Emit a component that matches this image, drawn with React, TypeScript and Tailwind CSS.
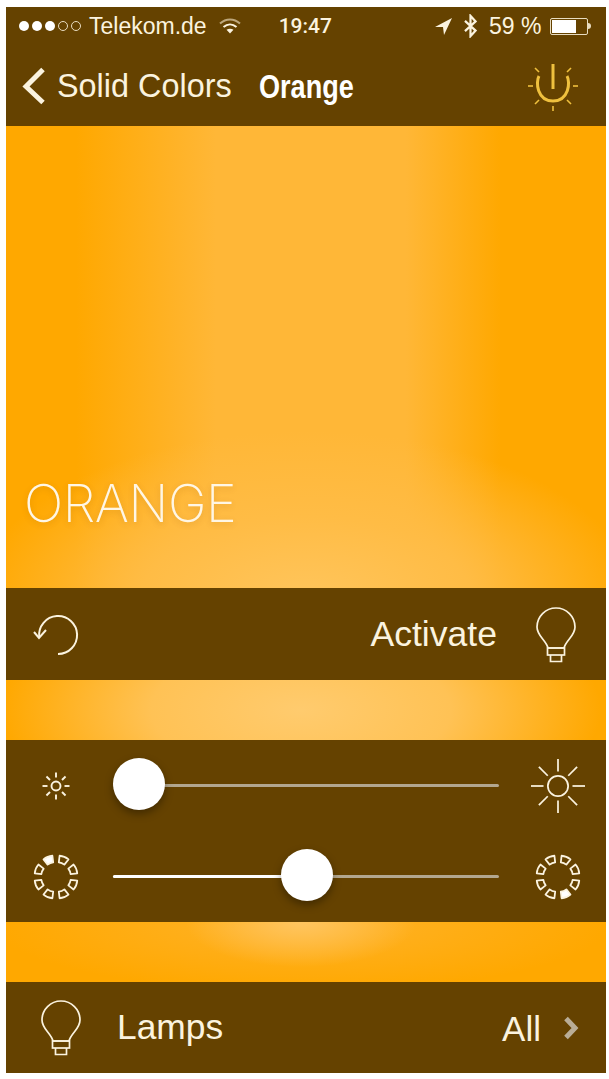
import React from "react";

const CREAM = "#fbf3df";

function Bulb({ className }: { className?: string }) {
  return (
    <svg viewBox="0 0 40 56" className={className} fill="none" stroke={CREAM} strokeWidth="1.7">
      <path d="M12 41 C10 33 1 29 1 20 A19 19 0 0 1 39 20 C39 29 30 33 28 41 Z" strokeLinejoin="round" />
      <rect x="11.5" y="41" width="17" height="7" />
      <path d="M14.5 48 V54.5 H25.5 V48" />
    </svg>
  );
}

function Sun({ r, inner, outer, size, width }: { r: number; inner: number; outer: number; size: number; width: number }) {
  const c = size / 2;
  return (
    <svg width={size} height={size} viewBox={`0 0 ${size} ${size}`} fill="none" stroke={CREAM} strokeWidth={width}>
      <circle cx={c} cy={c} r={r} />
      {[0, 45, 90, 135, 180, 225, 270, 315].map((a) => (
        <line key={a} x1={c} y1={c - inner} x2={c} y2={c - outer} transform={`rotate(${a} ${c} ${c})`} />
      ))}
    </svg>
  );
}

function Ring({ active }: { active: number }) {
  return (
    <svg width="48" height="48" viewBox="-24 -24 48 48" stroke={CREAM} strokeWidth="1.8" strokeLinejoin="round">
      {[0, 1, 2, 3, 4, 5, 6, 7].map((i) => (
        <path
          key={i}
          d="M-4.8 -21 Q0 -22.6 4.8 -21 L3 -14.6 Q0 -15.4 -3 -14.6 Z"
          transform={`rotate(${22.5 + i * 45})`}
          fill={i === active ? "#ffffff" : "none"}
        />
      ))}
    </svg>
  );
}

function Slider({ percent, thumbLeft }: { percent: number; thumbLeft: number }) {
  return (
    <div className="relative h-[3px] flex-1 rounded-full bg-[#b3a78f]">
      <div className="h-full rounded-full bg-white" style={{ width: `${percent}%` }} />
      <div
        className="absolute top-[-26px] h-[52px] w-[52px] rounded-full bg-white shadow-[0_4px_8px_rgba(0,0,0,0.35)]"
        style={{ left: thumbLeft }}
      />
    </div>
  );
}

export default function App() {
  return (
    <div className="h-[1079px] w-[609px] overflow-hidden bg-white pb-[6px] pl-[6px] pr-[3px] pt-[7px] font-['Liberation_Sans',sans-serif] text-[#fbf3df]">
      <div className="flex h-full flex-col">
        {/* Status bar + nav */}
        <header className="flex h-[119px] flex-col bg-[#654200]">
          <div className="flex h-[38px] items-center pl-[13px] text-[23px] leading-none">
            <div className="flex gap-[3px]">
              <span className="h-[10px] w-[10px] rounded-full bg-white" />
              <span className="h-[10px] w-[10px] rounded-full bg-white" />
              <span className="h-[10px] w-[10px] rounded-full bg-white" />
              <span className="h-[10px] w-[10px] rounded-full border border-[#e8dcc0]" />
              <span className="h-[10px] w-[10px] rounded-full border border-[#e8dcc0]" />
            </div>
            <span className="ml-[8px]">Telekom.de</span>
            <svg className="ml-[12px]" width="22" height="16" viewBox="0 0 22 16" fill="none" stroke={CREAM}>
              <path d="M1 5.5 C7 0 15 0 21 5.5" strokeWidth="2" stroke="#bda77c" />
              <path d="M4.5 9 C8.5 5.5 13.5 5.5 17.5 9" strokeWidth="2" />
              <path d="M11 15.5 L7.5 11.8 C9.5 10.3 12.5 10.3 14.5 11.8 Z" fill={CREAM} stroke="none" />
            </svg>
            <span className="ml-[38px] font-['Roboto',sans-serif] text-[21px] font-medium">19:47</span>
            <svg className="ml-[102px]" width="18" height="18" viewBox="0 0 18 18" fill={CREAM}>
              <path d="M18 1 L1 10 L9 10 L10 18 Z" />
            </svg>
            <svg className="ml-[11px]" width="15" height="24" viewBox="0 0 16 26" fill="none" stroke={CREAM} strokeWidth="2.4">
              <path d="M2 7.5 L13.5 18 L8 24 V2 L13.5 8 L2 18.5" />
            </svg>
            <span className="ml-[11px]">59 %</span>
            <div className="ml-[9px] flex items-center">
              <div className="h-[17px] w-[38px] rounded-[2px] border border-[#e8dcc0] p-[1px]">
                <div className="h-full w-[24px] bg-white" />
              </div>
              <div className="h-[6px] w-[3px] rounded-r-full bg-[#e8dcc0]" />
            </div>
          </div>
          <div className="flex flex-1 items-center pl-[14px] pr-[26px] pt-[1px]">
            <svg width="28" height="38" viewBox="0 0 28 38" fill="none" stroke={CREAM} strokeWidth="5">
              <path d="M23 2.5 L6 19.5 L23 35.5" />
            </svg>
            <span className="ml-[9px] text-[32.4px] leading-none">Solid Colors</span>
            <span className="ml-[27px] inline-block origin-left scale-x-[0.82] text-[33px] font-bold leading-none text-white">Orange</span>
            <svg className="ml-auto" width="54" height="50" viewBox="-27 -25 54 50" fill="none" stroke="#efc03e">
              <path d="M-14 -10 C-17.5 -4 -16 15 0 15 C16 15 17.5 -4 14 -10" strokeWidth="3" />
              <line x1="0" y1="-22" x2="0" y2="3" strokeWidth="3" />
              <g strokeWidth="1.6">
                <line x1="-25" y1="0" x2="-20" y2="0" />
                <line x1="20" y1="0" x2="25" y2="0" />
                <line x1="0" y1="20" x2="0" y2="25" />
                <line x1="-18" y1="-18" x2="-14" y2="-14" />
                <line x1="18" y1="-18" x2="14" y2="-14" />
                <line x1="-18" y1="18" x2="-14" y2="14" />
                <line x1="18" y1="18" x2="14" y2="14" />
              </g>
            </svg>
          </div>
        </header>

        <main className="flex flex-1 flex-col">
          {/* Main swatch */}
          <div className="flex h-[462px] flex-col justify-end bg-[radial-gradient(ellipse_330px_170px_at_300px_475px,#ffc55c_0%,#ffbc45_50%,rgba(255,168,0,0)_100%),linear-gradient(90deg,#ffa800_70px,#ffb737_210px,#ffb737_400px,#ffa800_495px)] pb-[58px] pl-[18px]">
            <span className="font-['Inter',sans-serif] text-[52px] font-[250] leading-none tracking-[-0.4px] text-[#fff6e4] [text-shadow:0_2px_6px_rgba(120,70,0,0.2)]">ORANGE</span>
          </div>

          <div className="flex h-[92px] items-center bg-[#654200] pl-[26px] pr-[30px] pt-[2px]">
            <svg width="48" height="44" viewBox="0 0 48 44" fill="none" stroke={CREAM} strokeWidth="2">
              <path d="M7.2 24 A19 19 0 1 1 26 41" />
              <path d="M2 19 L7 25 L14 17" />
            </svg>
            <span className="ml-auto text-[35.6px] leading-none">Activate</span>
            <Bulb className="ml-[39px] h-[56px] w-[40px]" />
          </div>

          <div className="h-[60px] bg-[#ffa800] bg-[radial-gradient(ellipse_300px_130px_at_295px_30px,#ffcb6e_0%,#ffc255_50%,rgba(255,168,0,0)_100%)]" />

          <div className="flex h-[182px] flex-col bg-[#654200] pl-[26px] pr-[20px]">
            <div className="flex h-[91px] items-center">
              <div className="flex w-[48px] justify-center">
                <Sun r={4.5} inner={8.5} outer={13.5} size={28} width={1.9} />
              </div>
              <div className="ml-[33px] flex flex-1">
                <Slider percent={0} thumbLeft={0} />
              </div>
              <div className="ml-[31px] flex w-[56px] justify-center">
                <Sun r={10.5} inner={15} outer={28} size={58} width={1.8} />
              </div>
            </div>
            <div className="flex h-[91px] items-center">
              <Ring active={7} />
              <div className="ml-[33px] flex flex-1">
                <Slider percent={46} thumbLeft={168} />
              </div>
              <div className="ml-[31px] flex w-[56px] justify-center">
                <Ring active={3} />
              </div>
            </div>
          </div>

          <div className="h-[60px] bg-[#ffa800] bg-[radial-gradient(ellipse_115px_45px_at_295px_0px,#ffc560_0%,rgba(255,168,0,0)_100%),radial-gradient(ellipse_310px_70px_at_295px_0px,#ffb32a_0%,rgba(255,168,0,0)_100%)]" />

          <div className="flex flex-1 items-center bg-[#654200] pl-[35px] pr-[27px] pt-[1px]">
            <Bulb className="h-[56px] w-[40px]" />
            <span className="ml-[36px] text-[35.4px] leading-none">Lamps</span>
            <span className="ml-auto text-[35px] leading-none">All</span>
            <svg className="ml-[22px]" width="16" height="26" viewBox="0 0 16 26" fill="none" stroke="#b9ad96" strokeWidth="5">
              <path d="M3 3.5 L12 13 L3 22.5" />
            </svg>
          </div>
        </main>
      </div>
    </div>
  );
}
